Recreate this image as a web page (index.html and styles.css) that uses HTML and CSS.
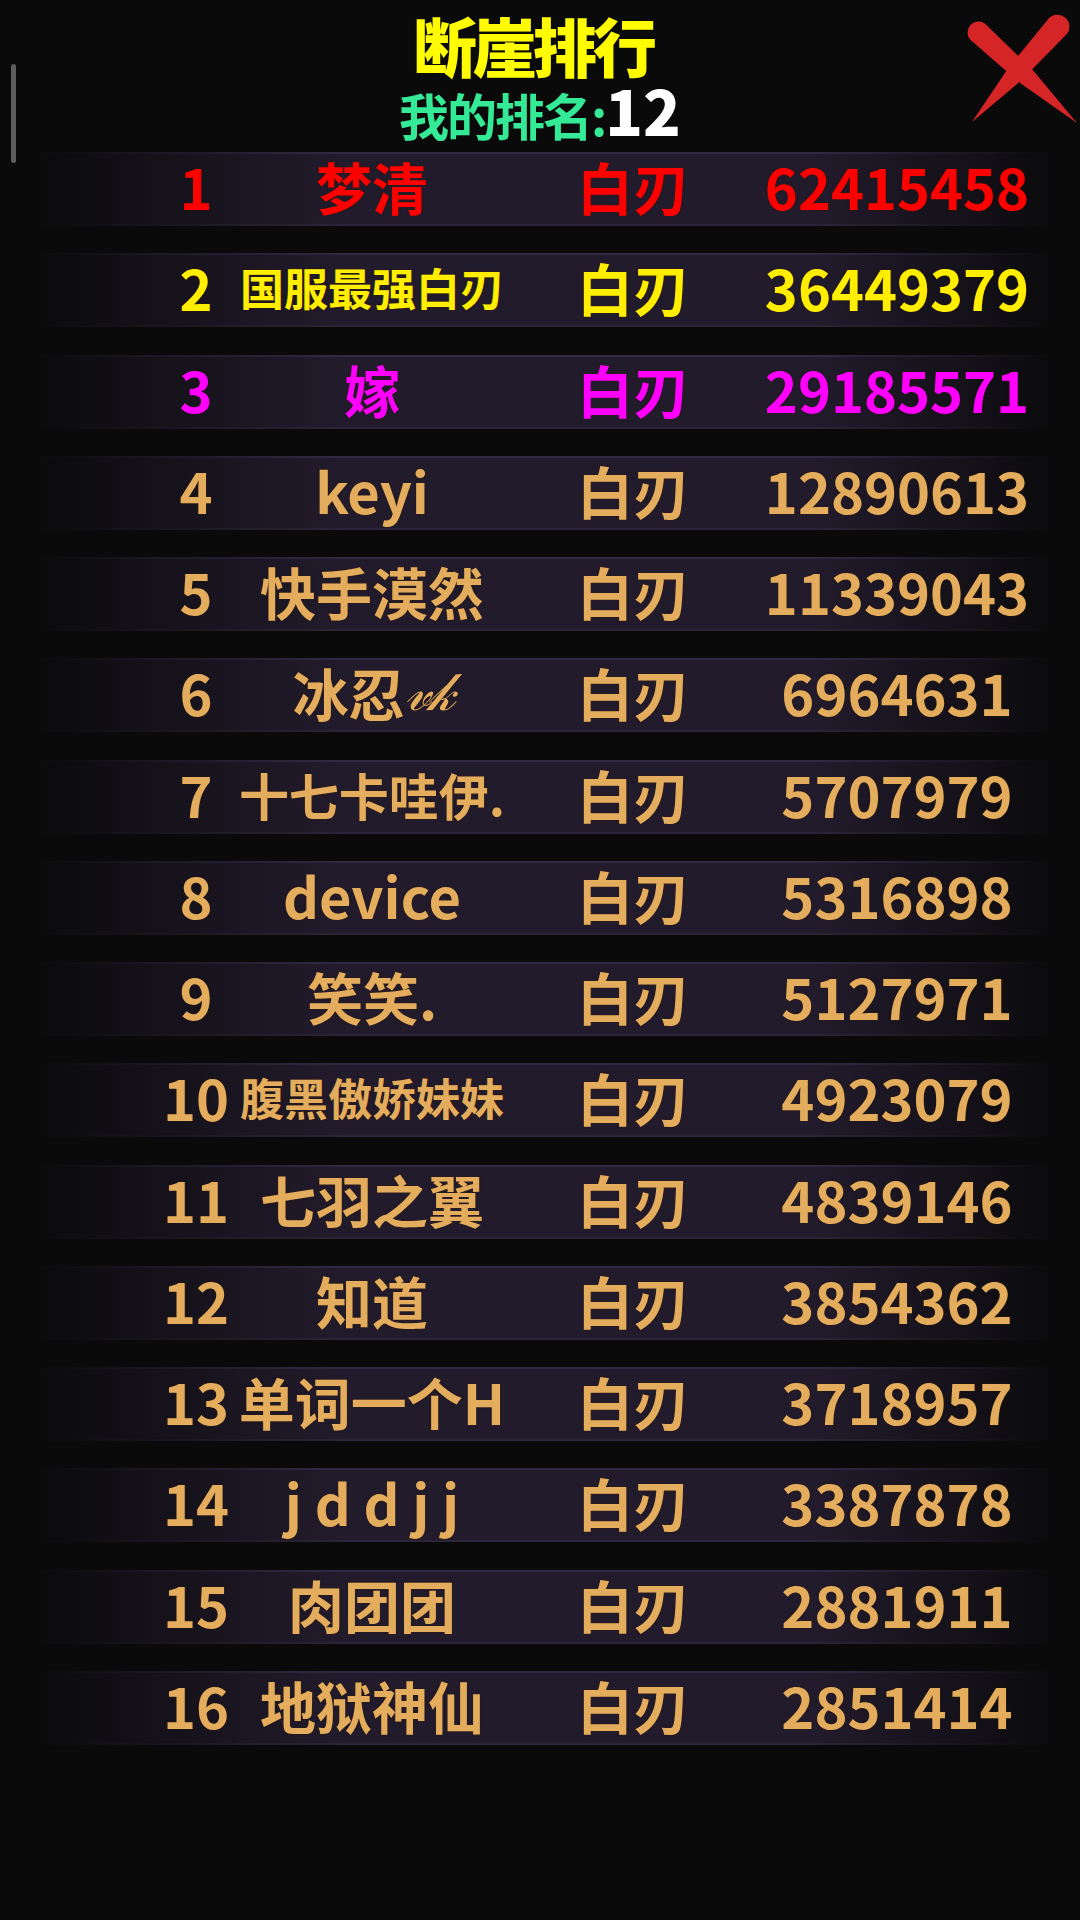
FILE: index.html
```html
<!DOCTYPE HTML>
<html lang="zh">
<head>
	<title>断崖排行</title>
	<meta charset="utf-8">
	<link rel="stylesheet" href="styles.css">
</head>
<body>
	<div class="scrollbar"></div>

	<div class="top">
		<h1 class="title">断崖排行</h1>
		<div class="mine"><span class="mine-label">我的排名:</span><span class="mine-num">12</span></div>
		<a class="close" href="#">
			<svg viewBox="0 0 140 140" width="140" height="140">
				<path d="M45.4 23.9 L93.6 70.9 L137 123 L81.4 84.1 L30.6 40.1 A11 11 0 0 1 45.4 23.9 Z" />
				<path d="M109.1 18 A12 12 0 0 1 126.9 34 L81.7 80 L32 122 L68.3 68 Z" />
			</svg>
		</a>
	</div>

	<ul class="board">
		<li class="row first"><span class="rank">1</span><span class="name">梦清</span><span class="job">白刃</span><span class="score">62415458</span></li>
		<li class="row second"><span class="rank">2</span><span class="name fit-s">国服最强白刃</span><span class="job">白刃</span><span class="score">36449379</span></li>
		<li class="row third"><span class="rank">3</span><span class="name">嫁</span><span class="job">白刃</span><span class="score">29185571</span></li>
		<li class="row"><span class="rank">4</span><span class="name">keyi</span><span class="job">白刃</span><span class="score">12890613</span></li>
		<li class="row"><span class="rank">5</span><span class="name">快手漠然</span><span class="job">白刃</span><span class="score">11339043</span></li>
		<li class="row"><span class="rank">6</span><span class="name">冰忍<span class="script">𝓋𝓀</span></span><span class="job">白刃</span><span class="score">6964631</span></li>
		<li class="row"><span class="rank">7</span><span class="name fit-m">十七卡哇伊.</span><span class="job">白刃</span><span class="score">5707979</span></li>
		<li class="row"><span class="rank">8</span><span class="name">device</span><span class="job">白刃</span><span class="score">5316898</span></li>
		<li class="row"><span class="rank">9</span><span class="name">笑笑.</span><span class="job">白刃</span><span class="score">5127971</span></li>
		<li class="row"><span class="rank">10</span><span class="name fit-s">腹黑傲娇妹妹</span><span class="job">白刃</span><span class="score">4923079</span></li>
		<li class="row"><span class="rank">11</span><span class="name">七羽之翼</span><span class="job">白刃</span><span class="score">4839146</span></li>
		<li class="row"><span class="rank">12</span><span class="name">知道</span><span class="job">白刃</span><span class="score">3854362</span></li>
		<li class="row"><span class="rank">13</span><span class="name">单词一个H</span><span class="job">白刃</span><span class="score">3718957</span></li>
		<li class="row"><span class="rank">14</span><span class="name">j d d j j</span><span class="job">白刃</span><span class="score">3387878</span></li>
		<li class="row"><span class="rank">15</span><span class="name">肉团团</span><span class="job">白刃</span><span class="score">2881911</span></li>
		<li class="row"><span class="rank">16</span><span class="name">地狱神仙</span><span class="job">白刃</span><span class="score">2851414</span></li>
	</ul>
</body>
</html>
```

FILE: styles.css
```css
html {
	height: 100%;
}

body {
	margin: 0;
	padding: 0;
	background: #0a0a0b;
	color: #e3ad5d;
	font-family: "Noto Sans CJK SC", "Noto Sans", sans-serif;
	font-weight: 700;
	min-height: 100%;
}

.scrollbar {
	position: absolute;
	left: 11px;
	top: 64px;
	width: 5px;
	height: 99px;
	border-radius: 3px;
	background: #5c5c5e;
}

.top {
	padding-top: 12px;
	display: flex;
	flex-direction: column;
	align-items: center;
}

.title {
	margin: 0;
	padding-right: 14px;
	font-size: 64px;
	line-height: 64px;
	font-weight: 900;
	letter-spacing: -4px;
	color: #fffb00;
}

.mine {
	display: flex;
	align-items: baseline;
	margin-top: 2px;
	line-height: 1;
}

.mine-label {
	font-size: 50px;
	letter-spacing: -2px;
	color: #35ea96;
}

.mine-num {
	font-size: 62px;
	font-weight: 900;
	color: #ffffff;
}

.close {
	position: absolute;
	top: 0;
	right: 0;
	width: 140px;
	height: 140px;
}

.close svg {
	display: block;
	fill: #d62527;
}

.board {
	list-style: none;
	margin: 12px 0 0 40px;
	padding: 0;
	width: 1014px;
	display: flex;
	flex-direction: column;
	gap: 27.27px;
}

.row {
	height: 74px;
	box-sizing: border-box;
	padding-left: 106px;
	display: grid;
	grid-template-columns: 100px 252px 270px 258px;
	font-size: 56px;
	line-height: 68px;
	white-space: nowrap;
	text-shadow: 0 0 2px rgba(60, 30, 0, 0.7);
	background:
		linear-gradient(to right, rgba(10,10,11,0.97) 0%, rgba(10,10,11,0.55) 12%, rgba(10,10,11,0) 30%, rgba(10,10,11,0) 76%, rgba(10,10,11,0.6) 92%, rgba(10,10,11,1) 100%),
		linear-gradient(to bottom, #322a42 0, #322a42 2px, #221b2c 2px, #221b2c 72px, #2c2438 72px);
}

.row span {
	display: flex;
	justify-content: center;
}

.row .name .script {
	display: inline;
	font-family: "DejaVu Serif", serif;
	font-style: italic;
	font-size: 0.95em;
	font-weight: 400;
	letter-spacing: -4px;
}

.name.fit-s {
	font-size: 44px;
}

.name.fit-m {
	font-size: 50px;
}

.first {
	color: #ff0000;
}

.second {
	color: #ffee00;
}

.third {
	color: #ff00ff;
}
```
